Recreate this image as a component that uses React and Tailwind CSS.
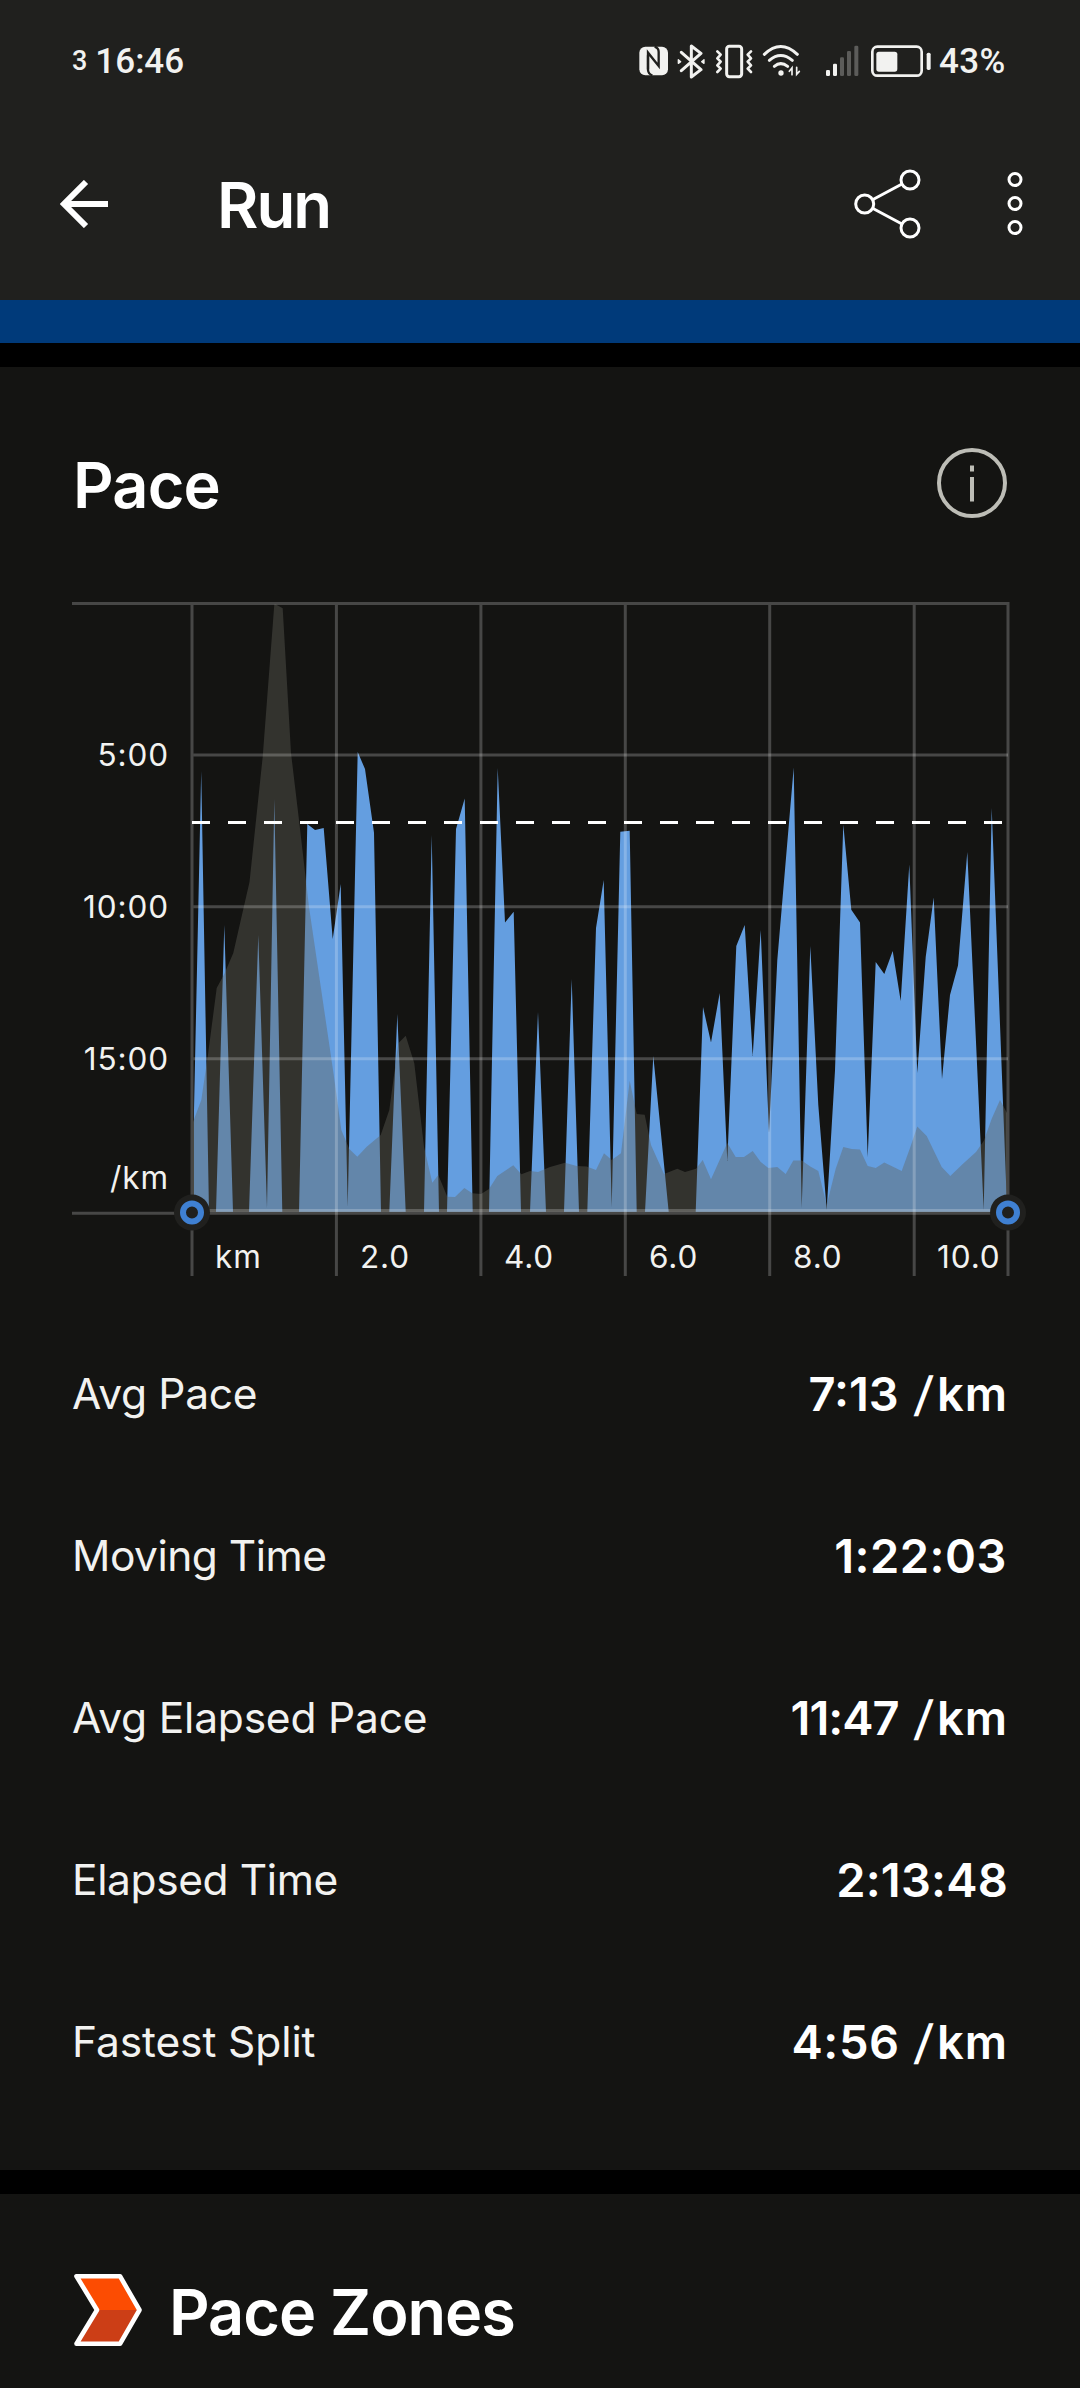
const STATS = [
  { label: 'Avg Pace',         value: '7:13',    unit: true,  labelTrack: 'tracking-[-0.3px]',  valueTrack: 'tracking-[0px] mr-1' },
  { label: 'Moving Time',      value: '1:22:03', unit: false, labelTrack: 'tracking-[-0.5px]',  valueTrack: 'tracking-[0.5px] mr-px' },
  { label: 'Avg Elapsed Pace', value: '11:47',   unit: true,  labelTrack: 'tracking-[-0.2px]',  valueTrack: 'tracking-[-1px] mr-1' },
  { label: 'Elapsed Time',     value: '2:13:48', unit: false, labelTrack: 'tracking-[-0.4px]',  valueTrack: 'tracking-[0.2px]' },
  { label: 'Fastest Split',    value: '4:56',    unit: true,  labelTrack: 'tracking-[-0.1px]',  valueTrack: 'tracking-[0.6px] mr-[3px]' },
]

// Plot area edges
const LEFT   = 192
const RIGHT  = 1008
const TOP    = 603.5
const BOTTOM = 1211.7

const X_LINES = [192, 336.4, 480.9, 625.3, 769.7, 914.2, 1008]
const Y_LINES = [755, 906.7, 1058.7, 1210.4]

const X_LABELS = [
  { x: 215, text: 'km' },
  { x: 360, text: '2.0' },
  { x: 504, text: '4.0' },
  { x: 649, text: '6.0' },
  { x: 793, text: '8.0' },
  { x: 937, text: '10.0' },
]

const Y_LABELS = [
  { y: 766,  text: '5:00' },
  { y: 918,  text: '10:00' },
  { y: 1070, text: '15:00' },
  { y: 1189, text: '/km' },
]

const PACE = [
  [194, 1211.7], [194, 1110], [201.2, 771], [209, 1211.7],
  [216, 1211.7], [224.3, 925], [233, 1211.7],
  [249, 1211.7], [258.3, 935], [267, 1208], [274.3, 799], [282.3, 1211.7],
  [299, 1211.7], [307.3, 824], [315, 830], [323.7, 828], [332.7, 939],
  [340.7, 884], [347.7, 1207], [357.7, 752], [365, 769], [374, 832.7], [381, 1211.7],
  [389.3, 1211.7], [397.3, 1014], [405.7, 1211.7],
  [424, 1211.7], [431.7, 835], [439, 1211.7],
  [447, 1211.7], [456, 829], [464.7, 798.5], [472.7, 1211.7],
  [489, 1211.7], [497.7, 768], [505, 922.5], [513.7, 911.7], [521, 1211.7],
  [530, 1211.7], [538, 1012], [546, 1211.7],
  [564, 1211.7], [571.7, 979], [579, 1211.7],
  [587.3, 1211.7], [596, 928], [603.7, 880], [611.7, 1207], [620.3, 831.7], [629.7, 830.7], [636.7, 1211.7],
  [645, 1211.7], [653.3, 1056], [668.7, 1211.7],
  [695.7, 1211.7], [703, 1007], [711, 1042.4], [719.7, 993], [727.3, 1161],
  [736.3, 946], [744.7, 925], [752.7, 1056], [760.7, 930], [769, 1133],
  [777.3, 960], [793.7, 767.5], [801.7, 1208], [810.3, 946], [818.3, 1105],
  [826.7, 1210], [835, 1070.6], [843.3, 824.5], [851.3, 909.8], [860, 922.5],
  [867.7, 1157], [875.7, 962], [884.3, 974], [892.7, 951], [900.7, 1001],
  [909.3, 864.5], [917.3, 1073], [925.7, 957], [933.7, 897.5], [942, 1079],
  [950, 995], [958, 965.6], [967.3, 852], [983.7, 1210], [991.7, 808], [1006, 1181], [1006.5, 1211.7],
]

const ELEVATION = [
  [193, 1211.7], [193, 1122], [201.3, 1100], [207.7, 1056.7], [216.7, 988], [224.3, 974],
  [233.3, 953], [236.7, 938], [249.5, 882], [262.7, 756.7], [274.3, 604.5], [276, 604.5], [282.7, 608.3],
  [291, 753], [299, 820], [309, 907], [334, 1076.7], [341.3, 1130], [349.3, 1149],
  [357.3, 1156.7], [366.7, 1146.7], [380.7, 1135], [389.3, 1110], [398.3, 1043.3],
  [405.7, 1035.7], [414.3, 1063.3], [424, 1146.7], [432.3, 1182.7], [438.3, 1175],
  [447.3, 1196.7], [455, 1197], [464.3, 1188], [472.3, 1193.3], [481, 1194], [489, 1189],
  [497.3, 1176], [513.3, 1165.3], [521.3, 1174.3], [530, 1171], [538, 1172], [550, 1167],
  [565, 1162.7], [576.7, 1166], [586.7, 1166.5], [596, 1170], [604, 1153.3], [611.7, 1160],
  [621, 1153.3], [629.7, 1080.7], [636.7, 1114], [644.7, 1114.7], [651, 1145], [664, 1174],
  [677.3, 1168.7], [685, 1172], [696, 1168.7], [702.7, 1160], [711, 1179.3], [727.3, 1143],
  [735.7, 1157], [744, 1157], [752.7, 1151], [760.7, 1162], [768.3, 1168], [777.3, 1167],
  [785.7, 1174], [793.3, 1160.5], [801.7, 1160.5], [810.3, 1166.4], [818.3, 1171],
  [826.7, 1205], [835.7, 1168.8], [843.3, 1147], [851.7, 1149], [860, 1149.5], [867.7, 1166],
  [875.7, 1168], [884.3, 1162.6], [901.7, 1171], [910, 1148], [917.3, 1126.4], [926.7, 1136],
  [941.7, 1167], [950.3, 1176], [963.3, 1163.6], [976, 1152], [983.7, 1141], [991.7, 1118.8],
  [1000, 1100], [1007, 1113], [1007, 1211.7],
]

const toPoints = pts => pts.map(p => p.join(',')).join(' ')

function NfcIcon() {
  return (
    <svg className="w-[30px] h-9" viewBox="57 39 90 108" fill="none">
      <rect x="58" y="50" width="86" height="86" rx="18" fill="#f2f2f0" />
      <path d="M84 118V68L116 108V66Q116 54 104 50" stroke="#20201e" strokeWidth="7" />
      <path d="M84 76V120Q85 132 97 136" stroke="#20201e" strokeWidth="7" />
    </svg>
  )
}

function BluetoothIcon() {
  return (
    <svg className="w-[30px] h-9" viewBox="168 39 90 108" fill="none" stroke="#f2f2f0" strokeWidth="9" strokeLinejoin="round" strokeLinecap="round">
      <path d="M184 67L243 119L214 141V48L243 70L184 122" />
      <path d="M175 89V100L182 95ZM252 89V100L245 95Z" strokeWidth="4" fill="#f2f2f0" />
    </svg>
  )
}

function VibrateIcon() {
  return (
    <svg className="w-[38px] h-9" viewBox="285 39 114 108" fill="none" stroke="#f2f2f0" strokeWidth="9" strokeLinejoin="round" strokeLinecap="round">
      <rect x="320" y="49" width="45" height="91" rx="8" />
      <path d="M292 64L302 74L292 85L302 95L292 106L302 116L292 126" strokeWidth="8" />
      <path d="M393 64L383 74L393 85L383 95L393 106L383 116L393 126" strokeWidth="8" />
    </svg>
  )
}

function WifiIcon() {
  return (
    <svg className="w-[39px] h-9" viewBox="426 39 117 108" fill="none" stroke="#f2f2f0" strokeWidth="9" strokeLinecap="round">
      <path d="M433 73Q482 26 532 73" />
      <path d="M448 91Q482 62 517 91" />
      <path d="M463 109Q482 93 503 109" />
      <circle cx="483" cy="129" r="8" fill="#f2f2f0" stroke="none" />
      <path d="M516 134V114L508 124M530 112V133L538 124" strokeWidth="5" />
    </svg>
  )
}

function SignalIcon() {
  return (
    <svg className="w-[34px] h-9" viewBox="615 39 102 108">
      <rect x="618" y="120" width="12" height="18" rx="4" fill="#f2f2f0" />
      <rect x="639" y="101" width="12" height="37" rx="4" fill="#f2f2f0" />
      <rect x="660" y="82" width="12" height="56" rx="4" fill="#5c5c5a" />
      <rect x="681" y="63" width="12" height="75" rx="4" fill="#5c5c5a" />
      <rect x="703" y="47" width="12" height="91" rx="4" fill="#5c5c5a" />
    </svg>
  )
}

function BatteryIcon() {
  return (
    <svg className="w-[62px] h-9" viewBox="750 39 186 108">
      <rect x="757" y="50" width="148" height="87" rx="15" fill="none" stroke="#f2f2f0" strokeWidth="8" />
      <rect x="769" y="65" width="63" height="60" rx="8" fill="#f2f2f0" />
      <rect x="920" y="68" width="12" height="52" rx="5" fill="#f2f2f0" />
    </svg>
  )
}

function StatusBar() {
  return (
    <div className="h-[122px] pl-[72px] flex items-center font-['Roboto',sans-serif] font-medium text-[#f2f2f0]">
      <span className="text-[27px] leading-none">3</span>
      <span className="ml-2 text-[35px] leading-none">16:46</span>
      <div className="ml-auto mr-[73px] flex items-center">
        <NfcIcon />
        <span className="ml-[7px]"><BluetoothIcon /></span>
        <span className="ml-[9px]"><VibrateIcon /></span>
        <span className="ml-[9px]"><WifiIcon /></span>
        <span className="ml-6"><SignalIcon /></span>
        <span className="ml-[11px]"><BatteryIcon /></span>
        <span className="ml-[7px] w-[68px] text-[35px] leading-none tracking-[0.3px]">43%</span>
      </div>
    </div>
  )
}

function AppBar() {
  return (
    <div className="h-[166px] flex items-center pl-[60px] pr-[56px]">
      <svg className="w-12 h-12 -mt-0.5" viewBox="0 0 48 48" fill="none" stroke="#fff" strokeWidth="6">
        <path d="M48 24H4M26 2L4 24L26 46" />
      </svg>
      <h1 className="ml-[109px] text-[63.5px] leading-none font-semibold tracking-[-2px]">Run</h1>
      <div className="ml-auto -mt-0.5 flex items-center gap-[85px]">
        <svg className="w-[68px] h-[72px]" viewBox="853 168 68 72" fill="none" stroke="#fff" strokeWidth="3">
          <circle cx="864.7" cy="204" r="9" />
          <circle cx="910" cy="180" r="9" />
          <circle cx="910" cy="228" r="9" />
          <path d="M873 199.5L902 184M873 208.5L902 224" />
        </svg>
        <svg className="w-[18px] h-[72px]" viewBox="1006.5 167 18 72" fill="none" stroke="#fff" strokeWidth="3">
          <circle cx="1015.5" cy="178.5" r="6" />
          <circle cx="1015.5" cy="202.5" r="6" />
          <circle cx="1015.5" cy="226.5" r="6" />
        </svg>
      </div>
    </div>
  )
}

function InfoIcon() {
  return (
    <svg className="w-[70px] h-[70px]" viewBox="0 0 70 70">
      <circle cx="35" cy="35" r="33" fill="none" stroke="#bdbdb6" strokeWidth="4" />
      <path d="M33 17.5h4v6h-4zM33 29h4v24.5h-4z" fill="#bdbdb6" />
    </svg>
  )
}

function Handle({ x }) {
  return (
    <g>
      <circle cx={x} cy="1212.6" r="18" fill="#20201e" />
      <circle cx={x} cy="1212.6" r="9" fill="none" stroke="#3f80d2" strokeWidth="6" />
    </g>
  )
}

function PaceChart() {
  return (
    <svg className="w-full h-[700px]" viewBox="0 590 1080 700">
      <polygon points={toPoints(PACE)} fill="#649ee0" />
      <polygon points={toPoints(ELEVATION)} fill="#61615b" fillOpacity="0.4" />

      {/* Grid */}
      <g stroke="#fff" strokeOpacity="0.22" strokeWidth="3">
        <path d={`M72 ${TOP}H${RIGHT + 1.5}`} />
        {Y_LINES.map(y => <path key={y} d={`M${LEFT + 1.5} ${y}H${RIGHT}`} />)}
        {X_LINES.map(x => <path key={x} d={`M${x} ${TOP + 1.5}V1276`} />)}
        <path d={`M72 ${BOTTOM + 1.6}H${RIGHT}`} />
      </g>

      {/* Average pace */}
      <path d={`M${LEFT} 822.4H${RIGHT - 6}`} stroke="#fff" strokeWidth="3" strokeDasharray="18 18" />

      <Handle x={LEFT} />
      <Handle x={RIGHT} />

      <g fill="#f2f2f0" className="text-[31.5px] tracking-[0.9px]">
        {Y_LABELS.map(l => (
          <text key={l.text} x="169" y={l.y} textAnchor="end">{l.text}</text>
        ))}
        {X_LABELS.map(l => (
          <text key={l.text} x={l.x} y="1268">{l.text}</text>
        ))}
      </g>
    </svg>
  )
}

function StatRow({ stat }) {
  return (
    <div className="h-[162px] flex items-center justify-between">
      <dt className={`text-[42.5px] leading-none font-normal text-[#f2f2f0] -mt-0.5 ${stat.labelTrack}`}>{stat.label}</dt>
      <dd className="text-[47px] leading-none font-semibold -mt-1 whitespace-nowrap">
        <span className={stat.valueTrack}>{stat.value}</span>
        {stat.unit && (
          <>
            {' '}
            <span className="inline-block -skew-x-6 font-medium mr-[5px]">/</span>
            <span className="tracking-[1px]">km</span>
          </>
        )}
      </dd>
    </div>
  )
}

export default function App() {
  return (
    <div className="w-[1080px] h-[2388px] flex flex-col overflow-hidden bg-black text-white font-['Inter',sans-serif]">
      <header className="h-[300px] shrink-0 bg-[#20201e]">
        <StatusBar />
        <AppBar />
      </header>
      <div className="h-[43px] shrink-0 bg-[#003a7a]" />

      <section className="mt-6 h-[1803px] shrink-0 bg-[#141412] pt-[81px]">
        <div className="h-[70px] pl-[73px] pr-[73px] flex items-center justify-between">
          <h2 className="text-[63px] leading-none font-semibold tracking-[-0.8px] mt-1">Pace</h2>
          <InfoIcon />
        </div>
        <div className="mt-[72px]">
          <PaceChart />
        </div>
        <dl className="mt-6 px-[72px]">
          {STATS.map(s => <StatRow key={s.label} stat={s} />)}
        </dl>
      </section>

      <section className="mt-6 flex-1 bg-[#141412] pt-20 pl-[72px]">
        <div className="h-[72px] flex items-center">
          <svg className="w-[72px] h-[76px]" viewBox="72 2272 72 76">
            <path d="M76 2276H120L140 2310L120 2344H76L97 2310Z" fill="#cc3e16" />
            <path d="M76 2276H120L140 2310H97Z" fill="#fc4c02" />
            <path d="M76.5 2276.2H120L139.5 2310L120 2343.8H76.5L97 2310Z" fill="none" stroke="#fff" strokeWidth="4.6" strokeLinejoin="round" />
          </svg>
          <h2 className="ml-[25px] mt-1 text-[63px] leading-none font-semibold tracking-[-1px]">Pace Zones</h2>
        </div>
      </section>
    </div>
  )
}
